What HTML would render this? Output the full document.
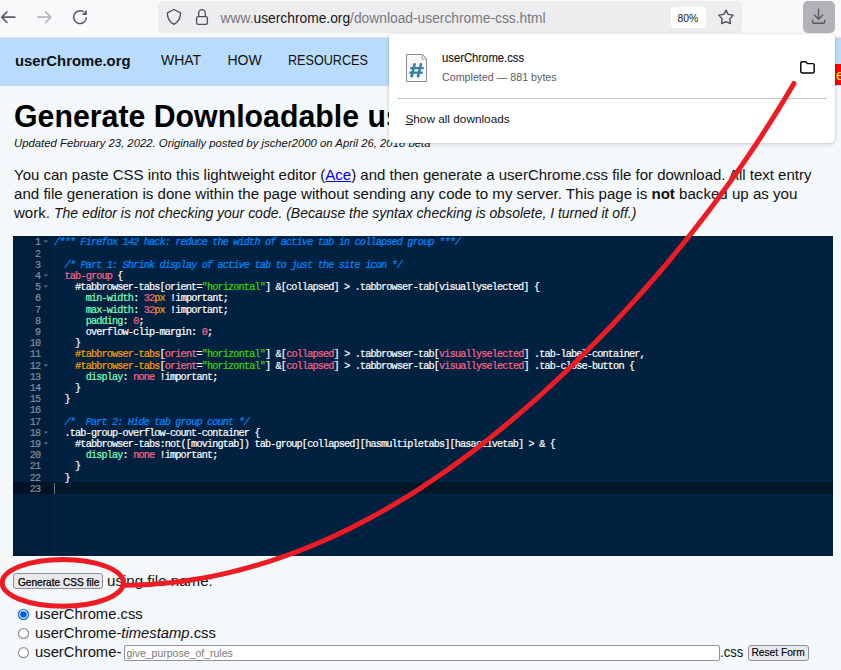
<!DOCTYPE html><html><head><meta charset="utf-8"><style>
*{margin:0;padding:0;box-sizing:border-box}
html,body{width:841px;height:670px;overflow:hidden;background:#f4f8fb;font-family:"Liberation Sans",sans-serif;color:#000}
.t{position:absolute;line-height:1;white-space:pre}
.abs{position:absolute}
#toolbar{position:absolute;left:0;top:0;width:841px;height:37px;background:#f9f9fb}
#url{position:absolute;left:158px;top:1px;width:584px;height:31.8px;background:#ededf0;border-radius:5px}
#nav{position:absolute;left:0;top:38px;width:841px;height:48px;background:#b9dcfd}
#editor{position:absolute;left:13px;top:236px;width:820px;height:320px;background:#002240;overflow:hidden}
#gutter{position:absolute;left:0;top:0;width:38px;height:320px;background:#011e3a}
.ln{position:absolute;left:0;width:820px;height:11.2px;font-family:"Liberation Mono",monospace;font-size:10.2px;line-height:11.2px;white-space:pre;color:#fff;letter-spacing:-0.84px;padding-top:1.4px;-webkit-text-stroke:0.2px currentColor}
.num{position:absolute;width:27.2px;text-align:right;color:#8091a0}
.code{position:absolute;left:41px}
.c{color:#0088ff;font-style:italic}
.s{color:#3ad900}
.k{color:#ff9d00}
.v{color:#ff628c}
.p{color:#80ffbb}
#popup{position:absolute;left:389px;top:33.5px;width:446px;height:109px;background:#fff;border-radius:5px;box-shadow:0 0 0 0.5px rgba(0,0,0,0.06),0 1px 4px rgba(0,0,0,0.16)}
</style></head><body>
<div id="toolbar"></div>
<div id="url"></div>
<div class="abs" style="left:671px;top:7px;width:35px;height:21px;background:#fff;border-radius:4px"></div>
<div class="t " style="left:677.5px;top:14.10px;font-size:10.4px;color:#15141a">80%</div>

<div class="t " style="left:220.5px;top:12.12px;font-size:13.8px;"><span style="color:#77767e">www.</span><span style="color:#15141a">userchrome.org</span><span style="color:#77767e">/download-userchrome-css.html</span></div>

<div class="abs" style="left:803px;top:1px;width:32px;height:32px;background:#b3b3b7;border-radius:5px"></div>
<svg class="abs" style="left:0;top:0" width="841" height="40" viewBox="0 0 841 40">
<g fill="none" stroke="#5b5b66" stroke-width="1.6" stroke-linecap="round" stroke-linejoin="round">
<path d="M1.8,17.1 H14.9 M6.9,11.9 L1.8,17.1 L6.9,22.5"/>
</g>
<g fill="none" stroke="#b4b4bc" stroke-width="1.6" stroke-linecap="round" stroke-linejoin="round">
<path d="M50.8,17.1 H37.6 M45.7,11.9 L50.8,17.1 L45.7,22.5"/>
</g>
<g fill="none" stroke="#5b5b66" stroke-width="1.5">
<path d="M86.4,17.2 A6.4,6.4 0 1 1 83.6,11.9"/>
</g>
<path d="M86.8,9.8 L86.8,14.9 L81.8,14.9 Z" fill="#5b5b66"/>
<g fill="none" stroke="#4e4e58" stroke-width="1.3" stroke-linejoin="round">
<path d="M173.9,9.5 L167.4,12.9 C167.3,18.2 169.5,21.8 173.9,24.4 C178.3,21.8 180.6,18.2 180.5,12.9 Z"/>
<path d="M198.7,16.6 V13.2 A3.3,3.6 0 0 1 205.3,13.2 V16.6"/>
<rect x="196.6" y="16.6" width="10.8" height="7.7" rx="1.6"/>
</g>
<path d="M726,10.3 L728.2,14.4 L733.2,15.1 L729.8,18.9 L730.4,23.6 L726,21.6 L721.6,23.6 L722.2,18.9 L718.8,15.1 L723.8,14.4 Z" fill="none" stroke="#4e4e58" stroke-width="1.4" stroke-linejoin="round"/>
<g fill="none" stroke="#5b5b66" stroke-width="1.4" stroke-linecap="round" stroke-linejoin="round">
<path d="M818.5,9.2 V19.2 M814.4,15 L818.5,19.2 L822.8,15"/>
<path d="M812.6,20.3 V22 A1.3,1.3 0 0 0 813.9,23.3 H823.3 A1.3,1.3 0 0 0 824.6,22 V20.3"/>
</g>
</svg>
<div id="nav"></div>
<div class="abs" style="left:0;top:37px;width:841px;height:1px;background:#e0dedf"></div>
<div class="t " style="left:15px;top:53.53px;font-size:14.85px;font-weight:bold;color:#111">userChrome.org</div>

<div class="t " style="left:161px;top:53.45px;font-size:14.0px;color:#111">WHAT</div>

<div class="t " style="left:227.5px;top:53.45px;font-size:14.0px;color:#111">HOW</div>

<div class="t " style="left:287.5px;top:53.45px;font-size:14.0px;transform:scaleX(0.9);transform-origin:0 0;color:#111">RESOURCES</div>

<div class="abs" style="left:835px;top:64px;width:6px;height:21px;background:#f00;overflow:hidden"><div class="t" style="left:1px;top:3px;font-size:15px;color:#ff0">e</div></div>
<div class="t " style="left:14px;top:100.76px;font-size:31.0px;transform:scaleX(0.977);transform-origin:0 0;font-weight:bold">Generate Downloadable userChrome.css</div>

<div class="t " style="left:14px;top:137.70px;font-size:11.34px;font-style:italic;color:#111">Updated February 23, 2022. Originally posted by jscher2000 on April 26, 2018 beta</div>

<div class="t " style="left:14px;top:166.90px;font-size:15.0px;color:#111">You can paste CSS into this lightweight editor (<span style="color:#00e;text-decoration:underline">Ace</span>) and then generate a userChrome.css file for download. All text entry</div>

<div class="t " style="left:14px;top:185.82px;font-size:15.1px;color:#111">and file generation is done within the page without sending any code to my server. This page is <b>not</b> backed up as you</div>

<div class="t " style="left:14px;top:205.00px;font-size:15.0px;color:#111">work. <i style="font-size:13.97px">The editor is not checking your code. (Because the syntax checking is obsolete, I turned it off.)</i></div>

<div id="editor"><div id="gutter"></div>
<div class="abs" style="left:0;top:246.4px;width:820px;height:11.2px;background:rgba(0,0,0,0.35)"></div>
<div class="ln" style="top:0.0px"><span class="num">1</span><span class="code"><span class="c">/*** Firefox 142 hack: reduce the width of active tab in collapsed group ***/</span></span></div>
<div class="ln" style="top:11.2px"><span class="num">2</span><span class="code"></span></div>
<div class="ln" style="top:22.4px"><span class="num">3</span><span class="code">  <span class="c">/* Part 1: Shrink display of active tab to just the site icon */</span></span></div>
<div class="ln" style="top:33.6px"><span class="num">4</span><span class="code">  <span class="v">tab-group</span> {</span></div>
<div class="ln" style="top:44.8px"><span class="num">5</span><span class="code">    #tabbrowser-tabs[orient=<span class="s">"horizontal"</span>] &amp;[collapsed] &gt; .tabbrowser-tab[visuallyselected] {</span></div>
<div class="ln" style="top:56.0px"><span class="num">6</span><span class="code">      <span class="p">min-width</span>: <span class="v">32</span><span class="k">px</span> !important;</span></div>
<div class="ln" style="top:67.2px"><span class="num">7</span><span class="code">      <span class="p">max-width</span>: <span class="v">32</span><span class="k">px</span> !important;</span></div>
<div class="ln" style="top:78.4px"><span class="num">8</span><span class="code">      <span class="p">padding</span>: <span class="v">0</span>;</span></div>
<div class="ln" style="top:89.6px"><span class="num">9</span><span class="code">      overflow-clip-margin: <span class="v">0</span>;</span></div>
<div class="ln" style="top:100.8px"><span class="num">10</span><span class="code">    }</span></div>
<div class="ln" style="top:112.0px"><span class="num">11</span><span class="code">    <span class="k">#tabbrowser-tabs</span>[<span class="v">orient</span>=<span class="s">"horizontal"</span>] &amp;[<span class="v">collapsed</span>] &gt; .tabbrowser-tab[<span class="v">visuallyselected</span>] .tab-label-container,</span></div>
<div class="ln" style="top:123.2px"><span class="num">12</span><span class="code">    <span class="k">#tabbrowser-tabs</span>[<span class="v">orient</span>=<span class="s">"horizontal"</span>] &amp;[<span class="v">collapsed</span>] &gt; .tabbrowser-tab[<span class="v">visuallyselected</span>] .tab-close-button {</span></div>
<div class="ln" style="top:134.4px"><span class="num">13</span><span class="code">      <span class="p">display</span>: <span class="v">none</span> !important;</span></div>
<div class="ln" style="top:145.6px"><span class="num">14</span><span class="code">    }</span></div>
<div class="ln" style="top:156.8px"><span class="num">15</span><span class="code">  }</span></div>
<div class="ln" style="top:168.0px"><span class="num">16</span><span class="code"></span></div>
<div class="ln" style="top:179.2px"><span class="num">17</span><span class="code">  <span class="c">/*  Part 2: Hide tab group count */</span></span></div>
<div class="ln" style="top:190.4px"><span class="num">18</span><span class="code">  .tab-group-overflow-count-container {</span></div>
<div class="ln" style="top:201.6px"><span class="num">19</span><span class="code">    #tabbrowser-tabs:not([movingtab]) tab-group[collapsed][hasmultipletabs][hasactivetab] &gt; &amp; {</span></div>
<div class="ln" style="top:212.8px"><span class="num">20</span><span class="code">      <span class="p">display</span>: <span class="v">none</span> !important;</span></div>
<div class="ln" style="top:224.0px"><span class="num">21</span><span class="code">    }</span></div>
<div class="ln" style="top:235.2px"><span class="num">22</span><span class="code">  }</span></div>
<div class="ln" style="top:246.4px"><span class="num">23</span><span class="code"></span></div>
<svg class="abs" style="left:30px;top:4.4px" width="6" height="4" viewBox="0 0 6 4"><path d="M0.6,0.6 H5 L2.8,2.6 Z" fill="#8091a0" opacity="0.85"/></svg>
<svg class="abs" style="left:30px;top:38.0px" width="6" height="4" viewBox="0 0 6 4"><path d="M0.6,0.6 H5 L2.8,2.6 Z" fill="#8091a0" opacity="0.85"/></svg>
<svg class="abs" style="left:30px;top:49.2px" width="6" height="4" viewBox="0 0 6 4"><path d="M0.6,0.6 H5 L2.8,2.6 Z" fill="#8091a0" opacity="0.85"/></svg>
<svg class="abs" style="left:30px;top:127.6px" width="6" height="4" viewBox="0 0 6 4"><path d="M0.6,0.6 H5 L2.8,2.6 Z" fill="#8091a0" opacity="0.85"/></svg>
<svg class="abs" style="left:30px;top:194.8px" width="6" height="4" viewBox="0 0 6 4"><path d="M0.6,0.6 H5 L2.8,2.6 Z" fill="#8091a0" opacity="0.85"/></svg>
<svg class="abs" style="left:30px;top:206.0px" width="6" height="4" viewBox="0 0 6 4"><path d="M0.6,0.6 H5 L2.8,2.6 Z" fill="#8091a0" opacity="0.85"/></svg>
<div class="abs" style="left:41.3px;top:247.4px;width:1px;height:10.4px;background:#8091a0;opacity:0.8"></div>
</div>
<div class="abs" style="left:13px;top:573px;width:90px;height:16px;background:#e9e9ed;border:1px solid #8f8f9d;border-radius:3px"></div>
<div class="t " style="left:18px;top:577.95px;font-size:10.1px;color:#000;-webkit-text-stroke:0.25px #000">Generate CSS file</div>

<div class="t " style="left:107px;top:572.52px;font-size:15.1px;color:#111">using file name:</div>

<svg class="abs" style="left:0;top:600px" width="40" height="70" viewBox="0 600 40 70">
<circle cx="23.5" cy="614.5" r="5" fill="#fff" stroke="#0060df" stroke-width="1.2"/>
<circle cx="23.5" cy="614.5" r="3.3" fill="#0060df"/>
<circle cx="23.5" cy="633.5" r="5" fill="#fff" stroke="#8f8f9d" stroke-width="1.2"/>
<circle cx="23.5" cy="652.7" r="5" fill="#fff" stroke="#8f8f9d" stroke-width="1.2"/>
</svg>
<div class="t " style="left:35px;top:606.67px;font-size:14.8px;color:#111">userChrome.css</div>

<div class="t " style="left:35px;top:625.77px;font-size:14.8px;color:#111">userChrome-<i>timestamp</i>.css</div>

<div class="t " style="left:35px;top:644.97px;font-size:14.8px;color:#111">userChrome-</div>

<div class="abs" style="left:123.5px;top:644.5px;width:596px;height:16px;background:#fff;border:1px solid #8f8f9d;border-radius:2px"></div>
<div class="t " style="left:126.5px;top:648.11px;font-size:10.5px;color:#777">give_purpose_of_rules</div>

<div class="t " style="left:720.3px;top:644.33px;font-size:15.2px;transform:scaleX(0.86);transform-origin:0 0;color:#111">.css</div>

<div class="abs" style="left:747.5px;top:645px;width:61px;height:16px;background:#e9e9ed;border:1px solid #8f8f9d;border-radius:3px"></div>
<div class="t " style="left:751.5px;top:648.37px;font-size:10.2px;color:#000;-webkit-text-stroke:0.12px #000">Reset Form</div>

<div id="popup"></div>
<div class="t " style="left:442px;top:52.14px;font-size:12.0px;transform:scaleX(0.94);transform-origin:0 0;color:#15141a;-webkit-text-stroke:0.15px #15141a">userChrome.css</div>

<div class="t " style="left:442px;top:72.44px;font-size:10.7px;color:#5b5b66">Completed — 881 bytes</div>

<div class="abs" style="left:397px;top:98px;width:430px;height:1px;background:#c4c4c8"></div>
<div class="t " style="left:405.4px;top:113.71px;font-size:11.8px;color:#15141a"><u>S</u>how all downloads</div>

<svg class="abs" style="left:0;top:0" width="841" height="150" viewBox="0 0 841 150">
<path d="M406.5,54.5 H422.5 L426.5,58.5 V81.5 H406.5 Z" fill="#f7f9fb" stroke="#8a8a8a" stroke-width="1" stroke-linejoin="miter"/>
<path d="M422,54.7 V59.2 H426.4" fill="#e6e6e6" stroke="#a0a0a0" stroke-width="0.8"/>
<g stroke="#3a7ea3" fill="none">
<path d="M414.8,63.2 L411.4,77.4 M421.2,63.2 L417.8,77.4" stroke-width="2.6"/>
<path d="M410.2,68.1 H423.8 M409.3,72.6 H422.8" stroke-width="2.2"/>
</g>
<g fill="none" stroke="#000" stroke-width="1.45" stroke-linejoin="round">
<path d="M800.8,63 A1.3,1.3 0 0 1 802.1,61.7 H805.8 L807.4,63.6 H812.9 A1.3,1.3 0 0 1 814.2,64.9 V71.6 A1.3,1.3 0 0 1 812.9,72.9 H802.1 A1.3,1.3 0 0 1 800.8,71.6 Z"/>
</g>
</svg>
<svg class="abs" style="left:0;top:0" width="841" height="670" viewBox="0 0 841 670">
<ellipse cx="62.8" cy="582.8" rx="60.6" ry="23.4" fill="none" stroke="#ed1c24" stroke-width="5"/>
<path d="M124.41,585.13 L134.14,585.02 L143.88,584.68 L153.62,584.13 L163.36,583.35 L173.09,582.37 L182.81,581.17 L192.51,579.76 L202.18,578.15 L211.82,576.34 L221.42,574.34 L230.98,572.15 L240.50,569.77 L249.97,567.21 L259.39,564.47 L268.75,561.56 L278.06,558.48 L287.31,555.24 L296.50,551.83 L305.63,548.27 L314.70,544.55 L323.70,540.69 L332.63,536.68 L341.50,532.53 L350.31,528.25 L359.04,523.83 L367.71,519.29 L376.31,514.62 L384.84,509.83 L393.30,504.92 L401.70,499.90 L410.03,494.77 L418.29,489.53 L426.49,484.19 L434.62,478.75 L442.68,473.22 L450.68,467.59 L458.62,461.87 L466.49,456.06 L474.31,450.17 L482.06,444.19 L489.74,438.14 L497.37,432.01 L504.94,425.80 L512.46,419.53 L519.91,413.18 L527.31,406.77 L534.65,400.29 L541.93,393.75 L549.16,387.14 L556.34,380.48 L563.46,373.76 L570.53,366.98 L577.54,360.15 L584.51,353.26 L591.42,346.32 L598.27,339.33 L605.08,332.29 L611.84,325.20 L618.54,318.06 L625.19,310.87 L631.79,303.64 L638.34,296.36 L644.83,289.03 L651.27,281.66 L657.66,274.25 L664.00,266.79 L670.29,259.29 L676.52,251.74 L682.69,244.15 L688.82,236.52 L694.88,228.85 L700.89,221.13 L706.85,213.37 L712.75,205.57 L718.59,197.72 L724.37,189.83 L730.09,181.90 L735.75,173.93 L741.35,165.92 L746.89,157.86 L752.37,149.76 L757.79,141.62 L763.14,133.43 L768.43,125.21 L773.65,116.94 L778.81,108.63 L783.91,100.28 L788.94,91.89 L793.90,83.46" fill="none" stroke="#ed1c24" stroke-width="5" stroke-linecap="round" stroke-linejoin="round"/>
</svg>
</body></html>
